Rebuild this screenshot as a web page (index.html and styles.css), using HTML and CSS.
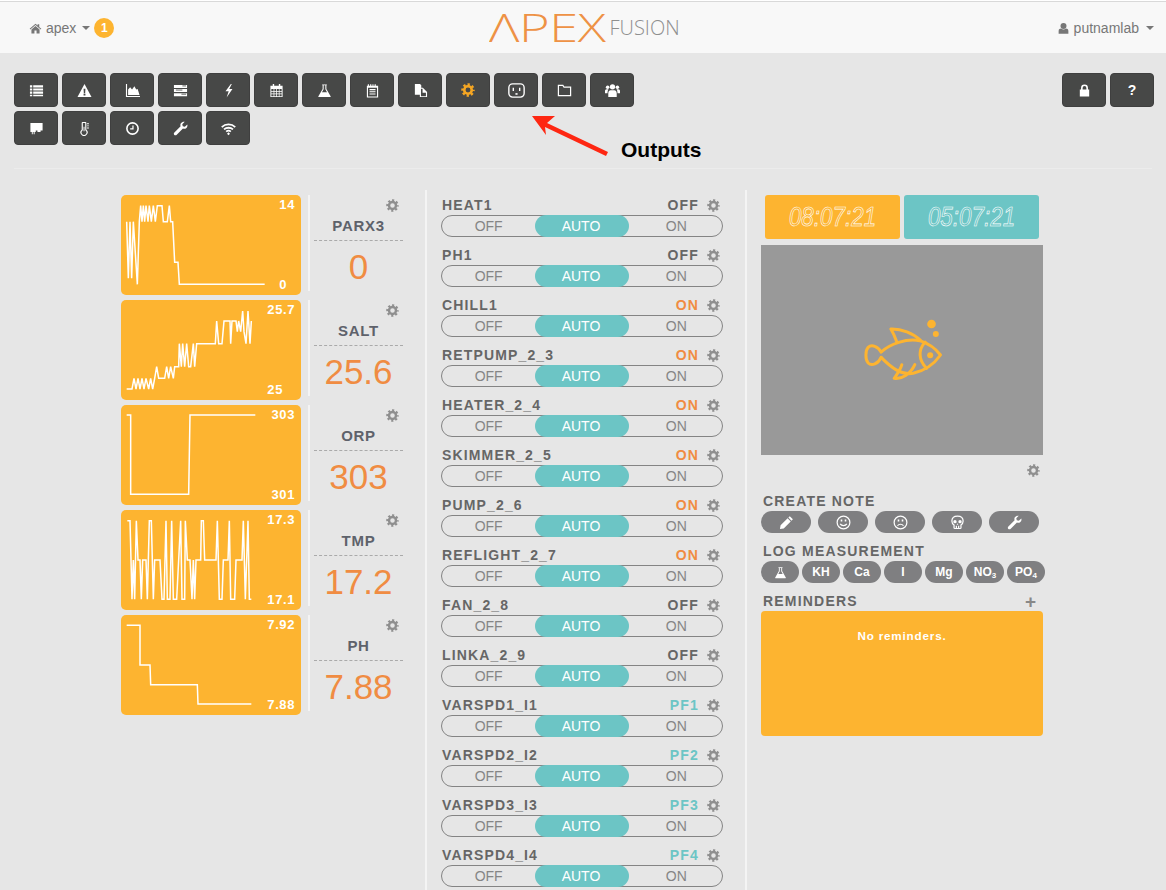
FILE: index.html
```html
<!DOCTYPE html>
<html lang="en">
<head>
<meta charset="utf-8">
<title>Apex Fusion</title>
<link rel="stylesheet" href="styles.css">
</head>
<body>
<svg class="defs" width="0" height="0" aria-hidden="true">
  <symbol id="gear" viewBox="0 0 16 16">
    <circle cx="8" cy="8" r="4.3" fill="none" stroke="currentColor" stroke-width="3"/>
    <circle cx="8" cy="8" r="6.3" fill="none" stroke="currentColor" stroke-width="2.8" stroke-dasharray="2.6 2.35" stroke-dashoffset="1.3"/>
  </symbol>
</svg>

<header class="nav">
  <div class="nav-left">
    <svg class="nav-icon" viewBox="0 0 16 16"><path d="M8 2 .8 8.4l.8.9L8 3.8l6.4 5.500.8-.9L12.600 6.100V2.800h-2V4.400zM3 9.300V14h3.700v-3.400h2.600V14H13V9.300L8 5z"/></svg>
    <span>apex</span>
    <i class="caret"></i>
    <b class="badge">1</b>
  </div>
  <div class="logo"><span class="logo-apex">ΛPEX</span><span class="logo-fusion">FUSION</span></div>
  <div class="nav-right">
    <svg class="nav-icon" viewBox="0 0 16 16"><circle cx="8" cy="5" r="3.700"/><path d="M2 14.500V11c0-2 1.500-3 3-3 1 .8 2 1.200 3 1.200S10 8.800 11 8c1.500 0 3 1 3 3v3.500z"/></svg>
    <span>putnamlab</span>
    <i class="caret"></i>
  </div>
</header>

<section class="toolbar">
  <div class="tool-grid">
    <button class="tool"><svg viewBox="0 0 16 16"><path d="M1 2.500h2.500v2.300H1zM4.500 2.500H15v2.300H4.500zM1 5.800h2.500v2.300H1zM4.500 5.800H15v2.300H4.500zM1 9.100h2.500v2.300H1zM4.500 9.100H15v2.300H4.500zM1 12.400h2.500v1.800H1zM4.500 12.400H15v1.800H4.500z"/></svg></button>
    <button class="tool"><svg viewBox="0 0 16 16"><path fill-rule="evenodd" d="M8 1 15.500 15H.5zM7 6l.3 4.800h1.400L9 6zM7 11.500v1.800h2v-1.800z"/></svg></button>
    <button class="tool"><svg viewBox="0 0 16 16"><path d="M1 1h1.200v12.800H16V15H1zM3.300 12.800V7l2.200-2.500 2 2.500 2.500-3.500 2 3.500 1.500-.5 2 6.300z"/></svg></button>
    <button class="tool"><svg viewBox="0 0 16 16"><path d="M1 2h14v3.200H1zM1 6.400h14v3.200H1zM1 10.800h14V14H1z"/><path class="cut" d="M10 3.100h4M3 7.500h7M9 11.900h5"/></svg></button>
    <button class="tool"><svg viewBox="0 0 16 16"><path d="M10.500 1 4.800 8.700h3.400L6 15.500l6.200-9H8.800l2.700-5.500z"/></svg></button>
    <button class="tool"><svg viewBox="0 0 16 16"><path fill-rule="evenodd" d="M1.500 3H4V1h1.500v2h5V1H12v2h2.500v12h-13zM2.500 6.500V8.500h2.400v-2zM5.700 6.500V8.500h2v-2zM8.500 6.500V8.500h2v-2zM11.200 6.500V8.500h2.300v-2zM2.500 9.300v2h2.400v-2zM5.700 9.300v2h2v-2zM8.500 9.300v2h2v-2zM11.200 9.300v2h2.300v-2zM2.500 12v2h2.400v-2zM5.700 12v2h2v-2zM8.500 12v2h2v-2zM11.200 12v2h2.300v-2z"/></svg></button>
    <button class="tool"><svg viewBox="0 0 16 16"><path fill-rule="evenodd" d="M5.500 1.500h5v1H10v3.800L14.500 14c.3.700-.1 1-.7 1H2.200c-.6 0-1-.3-.7-1L6 6.300V2.500h-.5zM7.100 2.500v4.100L5.300 9.800h5.400L8.900 6.600V2.500z"/></svg></button>
    <button class="tool"><svg viewBox="0 0 16 16"><path fill-rule="evenodd" d="M2 3h1V1.300h1.200V3h1.300V1.300h1.200V3h1.300V1.300H9V3h1.300V1.300h1.200V3H14v12.500H2zM3.200 5v9.300h9.600V5zM4.800 6.500h6.400v1.100H4.800zM4.800 8.800h6.400v1.100H4.800zM4.800 11.100h6.400v1.100H4.800z"/></svg></button>
    <button class="tool"><svg viewBox="0 0 16 16"><path fill-rule="evenodd" d="M2 1h5.500l1.300 1.300V5h1.700L15 9.500V15H7.300v-2.500H2zM8.500 6.200V14h5.300v-3.500H10.200V6.200z"/></svg></button>
    <button class="tool tool-active"><svg viewBox="0 0 16 16"><use href="#gear"/></svg></button>
    <button class="tool tool-wide"><svg viewBox="0 0 16 16" class="line"><rect x=".8" y="1.800" width="14.400" height="12.400" rx="3.500"/><path d="M5 5.500v3M11 5.500v3"/><path class="fill" d="M7 10.500h2V12H7z"/></svg></button>
    <button class="tool"><svg viewBox="0 0 16 16" class="line"><path d="M1.500 2.500h4.800l1.200 2h7v9h-13z"/></svg></button>
    <button class="tool"><svg viewBox="0 0 16 16"><circle cx="8" cy="4" r="2.800"/><circle cx="2.800" cy="4.500" r="1.900"/><circle cx="13.200" cy="4.500" r="1.900"/><path d="M3.500 15v-4c0-2 1.200-3.300 2.500-3.300h4c1.300 0 2.500 1.300 2.500 3.300v4zM0 11V8.500c0-1 .8-1.800 1.700-1.800h2.100C2.800 7.800 2.700 9.500 2.700 11zM16 11V8.500c0-1-.8-1.800-1.700-1.800h-2.100c1 1.100 1.100 2.800 1.100 4.300z"/></svg></button>
    <button class="tool"><svg viewBox="0 0 16 16"><path d="M1.500 2h13v8h-2.200v1.800H9V10H7.200v1.800H6V14H5v-2.200H4V14H3v-2.200H1.500z"/></svg></button>
    <button class="tool"><svg viewBox="0 0 16 16"><path fill-rule="evenodd" d="M6 1h3c.6 0 1 .4 1 1v7.300a3.800 3.800 0 1 1-5 0V2c0-.6.400-1 1-1zM6.200 2.200v7.700a2.700 2.700 0 1 0 2.600 0V2.200zM7 6h1v5h-1z"/><path d="M10.700 2.500h2v1h-2zM10.700 4.700h2v1h-2zM10.700 6.900h2v1h-2z"/></svg></button>
    <button class="tool"><svg viewBox="0 0 16 16" class="line"><circle cx="8" cy="8" r="6" stroke-width="1.700"/><path d="M8.500 4.800V8.500H5.500" stroke-width="1.300"/></svg></button>
    <button class="tool"><svg viewBox="0 0 16 16"><path d="M15.300 3.800c.4 1.700-.2 3.300-1.600 4.100-1 .6-2.100.6-3.100.2L4 14.700c-.8.800-1.900.8-2.600.1-.7-.7-.7-1.900.1-2.600l6.600-6.600c-.4-1-.3-2.200.3-3.100C9.300 1 11 .4 12.500.8L9.900 3.400l.5 2.200 2.200.5z"/></svg></button>
    <button class="tool"><svg viewBox="0 0 16 16" class="line wifi"><path d="M.8 6.500C4.800 2.700 11.200 2.700 15.200 6.500M3.200 9C5.900 6.600 10.100 6.600 12.800 9M5.500 11.300C7 10 9 10 10.500 11.300"/><path class="fill" d="M8 12l1.600 1.600L8 15.200 6.400 13.600z"/></svg></button>
  </div>
  <div class="tool-side">
    <button class="tool"><svg viewBox="0 0 16 16"><path d="M3 7h1.300V5.200a3.700 3.700 0 0 1 7.400 0V7H13v7.500H3zM6 7h4V5.200a2 2 0 0 0-4 0z"/></svg></button>
    <button class="tool tool-help">?</button>
  </div>
</section>
<hr class="rule">

<main class="dashboard">
  <section class="metrics">
    <article class="metric">
      <div class="tile">
        <svg class="spark" viewBox="33 30 540 300"><polyline points="50,110 55,280 60,110 65,280 70,110 82,298 88,110 92,62 96,110 100,62 104,110 108,62 114,110 118,62 124,110 130,62 136,110 142,62 156,62 160,110 172,110 178,62 182,110 188,110 194,232 204,232 208,298 464,298"/></svg>
        <div class="scale"><span>14</span><span>0</span></div>
      </div>
      <div class="reading">
        <svg class="gear"><use href="#gear"/></svg>
        <h3>PARX3</h3>
        <p>0</p>
      </div>
    </article>
    <article class="metric">
      <div class="tile">
        <svg class="spark" viewBox="33 345 540 300"><polyline points="50,612 66,612 72,580 78,612 84,580 90,612 96,580 102,612 108,580 116,612 122,580 128,612 134,580 140,545 146,580 164,580 170,545 176,580 182,545 190,580 194,545 206,545 208,476 214,545 218,476 224,545 230,476 236,545 242,545 250,476 254,545 260,476 316,476 320,408 326,476 336,476 342,408 360,408 362,476 366,408 378,408 382,440 386,408 392,440 398,378 402,440 408,476 414,378 420,476 424,408"/></svg>
        <div class="scale"><span>25.7</span><span>25</span></div>
      </div>
      <div class="reading">
        <svg class="gear"><use href="#gear"/></svg>
        <h3>SALT</h3>
        <p>25.6</p>
      </div>
    </article>
    <article class="metric">
      <div class="tile">
        <svg class="spark" viewBox="33 660 540 300"><polyline points="50,690 62,690 62,928 236,928 240,690 436,690"/></svg>
        <div class="scale"><span>303</span><span>301</span></div>
      </div>
      <div class="reading">
        <svg class="gear"><use href="#gear"/></svg>
        <h3>ORP</h3>
        <p>303</p>
      </div>
    </article>
    <article class="metric">
      <div class="tile">
        <svg class="spark" viewBox="33 30 540 300"><polyline points="52,62 60,62 66,298 70,180 74,298 79,62 84,180 90,180 94,298 98,180 108,180 112,298 118,62 124,62 130,298 134,180 150,180 156,298 162,298 168,62 172,298 180,298 185,62 190,298 200,298 206,180 212,62 216,298 224,298 226,62 232,180 240,180 246,298 250,180 254,298 258,180 272,180 274,62 280,62 284,180 318,180 322,62 328,298 336,298 340,180 354,180 358,62 362,298 374,298 378,180 396,180 400,62 406,298 414,62 418,298 424,298"/></svg>
        <div class="scale"><span>17.3</span><span>17.1</span></div>
      </div>
      <div class="reading">
        <svg class="gear"><use href="#gear"/></svg>
        <h3>TMP</h3>
        <p>17.2</p>
      </div>
    </article>
    <article class="metric">
      <div class="tile">
        <svg class="spark" viewBox="33 345 540 300"><polyline points="50,376 90,376 90,495 120,495 122,554 262,554 264,612 424,612"/></svg>
        <div class="scale"><span>7.92</span><span>7.88</span></div>
      </div>
      <div class="reading">
        <svg class="gear"><use href="#gear"/></svg>
        <h3>PH</h3>
        <p>7.88</p>
      </div>
    </article>
  </section>

  <section class="outputs">
    <div class="output"><div class="output-head"><span class="name">HEAT1</span><span class="state">OFF</span><svg class="gear"><use href="#gear"/></svg></div><div class="toggle"><span>OFF</span><span class="on">AUTO</span><span>ON</span></div></div>
    <div class="output"><div class="output-head"><span class="name">PH1</span><span class="state">OFF</span><svg class="gear"><use href="#gear"/></svg></div><div class="toggle"><span>OFF</span><span class="on">AUTO</span><span>ON</span></div></div>
    <div class="output"><div class="output-head"><span class="name">CHILL1</span><span class="state state-on">ON</span><svg class="gear"><use href="#gear"/></svg></div><div class="toggle"><span>OFF</span><span class="on">AUTO</span><span>ON</span></div></div>
    <div class="output"><div class="output-head"><span class="name">RETPUMP_2_3</span><span class="state state-on">ON</span><svg class="gear"><use href="#gear"/></svg></div><div class="toggle"><span>OFF</span><span class="on">AUTO</span><span>ON</span></div></div>
    <div class="output"><div class="output-head"><span class="name">HEATER_2_4</span><span class="state state-on">ON</span><svg class="gear"><use href="#gear"/></svg></div><div class="toggle"><span>OFF</span><span class="on">AUTO</span><span>ON</span></div></div>
    <div class="output"><div class="output-head"><span class="name">SKIMMER_2_5</span><span class="state state-on">ON</span><svg class="gear"><use href="#gear"/></svg></div><div class="toggle"><span>OFF</span><span class="on">AUTO</span><span>ON</span></div></div>
    <div class="output"><div class="output-head"><span class="name">PUMP_2_6</span><span class="state state-on">ON</span><svg class="gear"><use href="#gear"/></svg></div><div class="toggle"><span>OFF</span><span class="on">AUTO</span><span>ON</span></div></div>
    <div class="output"><div class="output-head"><span class="name">REFLIGHT_2_7</span><span class="state state-on">ON</span><svg class="gear"><use href="#gear"/></svg></div><div class="toggle"><span>OFF</span><span class="on">AUTO</span><span>ON</span></div></div>
    <div class="output"><div class="output-head"><span class="name">FAN_2_8</span><span class="state">OFF</span><svg class="gear"><use href="#gear"/></svg></div><div class="toggle"><span>OFF</span><span class="on">AUTO</span><span>ON</span></div></div>
    <div class="output"><div class="output-head"><span class="name">LINKA_2_9</span><span class="state">OFF</span><svg class="gear"><use href="#gear"/></svg></div><div class="toggle"><span>OFF</span><span class="on">AUTO</span><span>ON</span></div></div>
    <div class="output"><div class="output-head"><span class="name">VARSPD1_I1</span><span class="state state-pf">PF1</span><svg class="gear"><use href="#gear"/></svg></div><div class="toggle"><span>OFF</span><span class="on">AUTO</span><span>ON</span></div></div>
    <div class="output"><div class="output-head"><span class="name">VARSPD2_I2</span><span class="state state-pf">PF2</span><svg class="gear"><use href="#gear"/></svg></div><div class="toggle"><span>OFF</span><span class="on">AUTO</span><span>ON</span></div></div>
    <div class="output"><div class="output-head"><span class="name">VARSPD3_I3</span><span class="state state-pf">PF3</span><svg class="gear"><use href="#gear"/></svg></div><div class="toggle"><span>OFF</span><span class="on">AUTO</span><span>ON</span></div></div>
    <div class="output"><div class="output-head"><span class="name">VARSPD4_I4</span><span class="state state-pf">PF4</span><svg class="gear"><use href="#gear"/></svg></div><div class="toggle"><span>OFF</span><span class="on">AUTO</span><span>ON</span></div></div>
  </section>

  <section class="side">
    <div class="clocks">
      <div class="clock clock-local"><span>08:07:21</span></div>
      <div class="clock clock-remote"><span>05:07:21</span></div>
    </div>
    <div class="photo">
      <svg class="fish" viewBox="340 380 245 195">
        <path d="M394 482C420 458 470 440 510 448C540 458 560 475 572 491C555 515 525 538 490 546C455 552 425 530 394 498"/>
        <path d="M394 482C385 465 365 458 355 468C346 478 346 505 355 515C365 525 385 518 394 498"/>
        <path d="M441 452C436 438 430 424 423 413C455 412 490 425 512 447"/>
        <path d="M526 452C505 475 505 505 530 531"/>
        <path d="M456 520C452 535 442 548 433 561C455 565 482 548 495 520"/>
        <circle class="dot" cx="541" cy="492" r="9"/>
        <circle class="dot" cx="545" cy="398" r="13"/>
        <circle class="dot" cx="558" cy="428" r="9"/>
      </svg>
    </div>
    <div class="photo-foot"><svg class="gear"><use href="#gear"/></svg></div>

    <h4>CREATE NOTE</h4>
    <div class="pills pills-note">
      <button class="pill"><svg viewBox="0 0 16 16"><path d="M11.500 1.200 14.800 4.500 13.300 6 10 2.700zM9.200 3.500 12.500 6.800 5 14.300 1 15l.7-4z"/></svg></button>
      <button class="pill"><svg viewBox="0 0 16 16" class="line"><circle cx="8" cy="8" r="6.800"/><path d="M4.500 9.500C6 12 10 12 11.500 9.500"/><path class="fill" d="M5 4.800h1.700v2H5zM9.300 4.800H11v2H9.300z"/></svg></button>
      <button class="pill"><svg viewBox="0 0 16 16" class="line"><circle cx="8" cy="8" r="6.800"/><path d="M4.800 11.500C6.300 9.300 9.700 9.300 11.200 11.500"/><path class="fill" d="M5 4.800h1.700v2H5zM9.300 4.800H11v2H9.300z"/></svg></button>
      <button class="pill"><svg viewBox="0 0 16 16" class="line"><path d="M8 1.200c3.700 0 6 2.300 6 5.300 0 1.900-.9 3.300-2.300 4.100v2.900c0 .5-.4.900-.9.900H5.200c-.5 0-.9-.4-.9-.9v-2.900C2.900 9.800 2 8.400 2 6.500 2 3.500 4.300 1.200 8 1.200zM6.800 11.500v3M9.200 11.500v3"/><path class="fill" d="M5.300 5.300a1.800 1.800 0 1 0 0 3.600 1.800 1.800 0 0 0 0-3.600zM10.700 5.300a1.800 1.800 0 1 0 0 3.600 1.800 1.800 0 0 0 0-3.600zM8 8.800l-.9 1.700h1.800z"/></svg></button>
      <button class="pill"><svg viewBox="0 0 16 16"><path d="M15.300 3.800c.4 1.700-.2 3.300-1.600 4.100-1 .6-2.100.6-3.100.2L4 14.700c-.8.800-1.900.8-2.600.1-.7-.7-.7-1.900.1-2.600l6.600-6.600c-.4-1-.3-2.200.3-3.100C9.300 1 11 .4 12.500.8L9.900 3.400l.5 2.200 2.200.5z"/></svg></button>
    </div>

    <h4>LOG MEASUREMENT</h4>
    <div class="pills pills-log">
      <button class="pill"><svg viewBox="0 0 16 16"><path fill-rule="evenodd" d="M5.500 1.500h5v1H10v3.800L14.500 14c.3.700-.1 1-.7 1H2.200c-.6 0-1-.3-.7-1L6 6.300V2.500h-.5zM7.100 2.500v4.100L5.300 9.800h5.400L8.900 6.600V2.500z"/></svg></button>
      <button class="pill"><span>KH</span></button>
      <button class="pill"><span>Ca</span></button>
      <button class="pill"><span>I</span></button>
      <button class="pill"><span>Mg</span></button>
      <button class="pill"><span>NO<sub>3</sub></span></button>
      <button class="pill"><span>PO<sub>4</sub></span></button>
    </div>

    <div class="reminders-head"><h4>REMINDERS</h4><span class="plus">+</span></div>
    <div class="reminders">No reminders.</div>
  </section>
</main>

<div class="callout">
  <svg class="callout-arrow" viewBox="0 0 90 50"><path d="M0 3 23 3 15 10 76 39 74 43 13 14 14 22z" transform="translate(1 -2)"/></svg>
  <span class="callout-text">Outputs</span>
</div>
</body>
</html>
```

FILE: styles.css
```css
* { box-sizing: border-box; }
html, body { margin: 0; height: 890px; overflow: hidden; }
body {
  position: relative;
  background: #e6e6e6;
  font-family: "Liberation Sans", Arial, sans-serif;
  color: #666;
}
.defs { position: absolute; }

/* nav */
.nav {
  position: relative;
  height: 53px;
  background: #f8f8f8;
  border-top: 1px solid #fff;
  box-shadow: inset 0 1px 0 #d9d9d9;
  display: flex;
  align-items: center;
  justify-content: space-between;
  padding: 2px 12px 0 29px;
  font-size: 14px;
  color: #777;
}
.nav-left, .nav-right { display: flex; align-items: center; gap: 4px; }
.nav-icon { width: 13px; height: 13px; fill: #777; }
.caret {
  width: 0; height: 0; margin-left: 2px;
  border-left: 4px solid transparent;
  border-right: 4px solid transparent;
  border-top: 4px solid #777;
}
.nav-right .caret { margin-left: 3px; }
.badge {
  width: 20px; height: 20px; border-radius: 50%;
  background: #fdb430; color: #fff; font-size: 12px; line-height: 20px; text-align: center;
}
.logo {
  position: absolute; left: 489px; top: 4px;
  display: flex; align-items: center; height: 44px;
  white-space: nowrap;
}
.logo-apex {
  display: inline-block;
  transform: scaleX(1.38); transform-origin: left center;
  font-family: "Open Sans", sans-serif; font-weight: 300;
  font-size: 38px; line-height: 44px; color: #ee9245; letter-spacing: -.3px;
}
.logo-fusion {
  font-family: "Open Sans", sans-serif; font-weight: 300;
  font-size: 20px; color: #8f8f8f; margin-left: 36px;
}

/* toolbar */
.toolbar {
  display: flex;
  justify-content: space-between;
  padding: 20px 12px 0 14px;
}
.tool-grid { display: flex; flex-wrap: wrap; gap: 4px; width: 620px; }
.tool-side { display: flex; gap: 4px; align-items: flex-start; }
.tool {
  width: 44px; height: 34px; padding: 0;
  display: flex; align-items: center; justify-content: center;
  background: #474847; border: 1px solid #3f3f3f; border-radius: 4px;
  color: #fff; fill: #fff;
}
.tool svg { width: 15px; height: 15px; display: block; }
.tool-active { color: #f5a623; }
.tool-active svg { width: 14px; height: 14px; }
.tool-wide svg { width: 17px; height: 17px; }
.tool-help { font: bold 14px "Liberation Sans", Arial, sans-serif; }
.line { fill: none; stroke: currentColor; stroke-width: 1.300; }
.line .fill { fill: currentColor; stroke: none; }
.cut { stroke: #474847; stroke-width: .9; fill: none; }
.wifi { stroke-width: 1.900; }
.rule { margin: 23px 14px 0; border: 0; height: 1px; background: #ececec; }

/* dashboard */
.dashboard {
  display: flex;
  margin-top: 21px;
  padding-left: 121px;
}
.metrics { width: 304px; padding-top: 5px; }
.metric { display: flex; height: 105px; }
.tile {
  position: relative;
  width: 180px; height: 100px;
  background: #fdb430; border-radius: 5px;
  padding: 1px 6px 2px 0;
  display: flex; justify-content: flex-end;
}
.scale {
  position: relative;
  display: flex; flex-direction: column; justify-content: space-between; align-items: flex-start;
  color: #fff; font-size: 13px; font-weight: bold; letter-spacing: .6px; line-height: 17px;
}
.spark { position: absolute; left: 0; top: 0; width: 180px; height: 100px; }
.spark polyline { fill: none; stroke: #fff; stroke-width: 4.500; stroke-linejoin: miter; }
.reading {
  position: relative;
  width: 102px; height: 96px; margin-left: 7px; padding-left: 4px;
  border-left: 2px solid #f4f4f4;
  text-align: center;
}
.gear { display: block; width: 13px; height: 13px; color: #8f8f8f; }
.reading .gear { position: absolute; right: 11px; top: 4px; }
.reading h3 {
  width: 89px; margin: 0; padding: 22px 0 5px;
  font-size: 15px; line-height: 18px; letter-spacing: .7px; color: #5e626b;
  border-bottom: 1px dashed #aaa;
}
.reading p {
  width: 89px; margin: 0; padding-top: 6px;
  font-size: 35px; line-height: 40px; color: #f08c42;
}

/* outputs */
.outputs {
  width: 320px; height: 700px;
  border-left: 2px solid #f4f4f4;
  padding: 5px 22px 0 14px;
}
.output { height: 50px; }
.output-head {
  display: flex; align-items: center;
  height: 20px; padding: 0 3px 0 1px;
  font-size: 14px; font-weight: bold; letter-spacing: 1.150px;
}
.name { flex: 1; }
.output-head .gear { margin-left: 8px; }
.state-on { color: #f08c42; }
.state-pf { color: #6cc5c5; }
.toggle {
  display: grid; grid-template-columns: repeat(3, 1fr);
  height: 22px;
  border: 1px solid #848484; border-radius: 11px;
  font-size: 14px; line-height: 20px; text-align: center; color: #858585;
}
.toggle .on {
  margin: -1px 0; padding-right: 2px; line-height: 22px;
  background: #6cc5c5; color: #fff; border-radius: 11px;
}
.toggle span:last-child { padding-left: 2px; }

/* side */
.side {
  width: 298px; height: 700px;
  border-left: 2px solid #f4f4f4;
  padding: 5px 0 0 14px;
  color: #666;
}
.clocks { display: flex; gap: 4px; margin: 0 4px 6px; }
.clock {
  width: 135px; height: 44px;
  border-radius: 3px; text-align: center;
  font-size: 28px; line-height: 44px; font-style: italic;
  color: transparent; -webkit-text-stroke: .65px #fff;
}
.clock span { display: inline-block; transform: scaleX(.8); }
.clock-local { background: #fdb430; }
.clock-remote { background: #6cc5c5; }
.photo {
  width: 282px; height: 210px; background: #999;
  display: flex; align-items: center; justify-content: center;
}
.fish { width: 82px; height: 65px; margin-left: 4px; }
.fish path { fill: none; stroke: #fdb430; stroke-width: 9; stroke-linejoin: round; stroke-linecap: round; }
.fish .dot { fill: #fdb430; }
.photo-foot { display: flex; justify-content: flex-end; padding: 9px 3px 0 0; height: 37px; }
.side h4 {
  margin: 0; height: 19px; padding-left: 2px;
  font-size: 14px; line-height: 19px; font-weight: bold; letter-spacing: 1.200px;
}
.pills { display: flex; margin-bottom: 9px; }
.pills-note { gap: 7px; }
.pills-log { gap: 3px; width: 284px; }
.pill {
  height: 22px; padding: 0;
  display: flex; align-items: center; justify-content: center;
  background: #7f7f81; border: 0; border-radius: 11px;
  color: #fff; fill: #fff;
  font: bold 12px "Liberation Sans", Arial, sans-serif;
}
.pill svg { width: 15px; height: 15px; }
.pills-note .pill { width: 50px; }
.pills-log .pill { width: 38px; }
.pills-log .pill svg { width: 13px; height: 13px; }
.pill sub { font-size: 8px; line-height: 0; vertical-align: -2px; }
.reminders-head { display: flex; justify-content: space-between; align-items: center; }
.plus { font-size: 19px; font-weight: bold; line-height: 19px; color: #888; margin-right: 7px; }
.reminders {
  width: 282px; height: 125px;
  background: #fdb430; border-radius: 4px;
  padding-top: 18px;
  color: #fff; font-size: 11.700px; font-weight: bold; letter-spacing: .8px; line-height: 14px; text-align: center;
}

/* screenshot annotation */
.callout { position: absolute; left: 0; top: 0; }
.callout-arrow { position: absolute; left: 531px; top: 115px; width: 90px; height: 50px; fill: #fe2712; }
.callout-text {
  position: absolute; left: 621px; top: 137px;
  font-size: 21px; line-height: 26px; font-weight: bold; color: #000; white-space: nowrap;
}
```
